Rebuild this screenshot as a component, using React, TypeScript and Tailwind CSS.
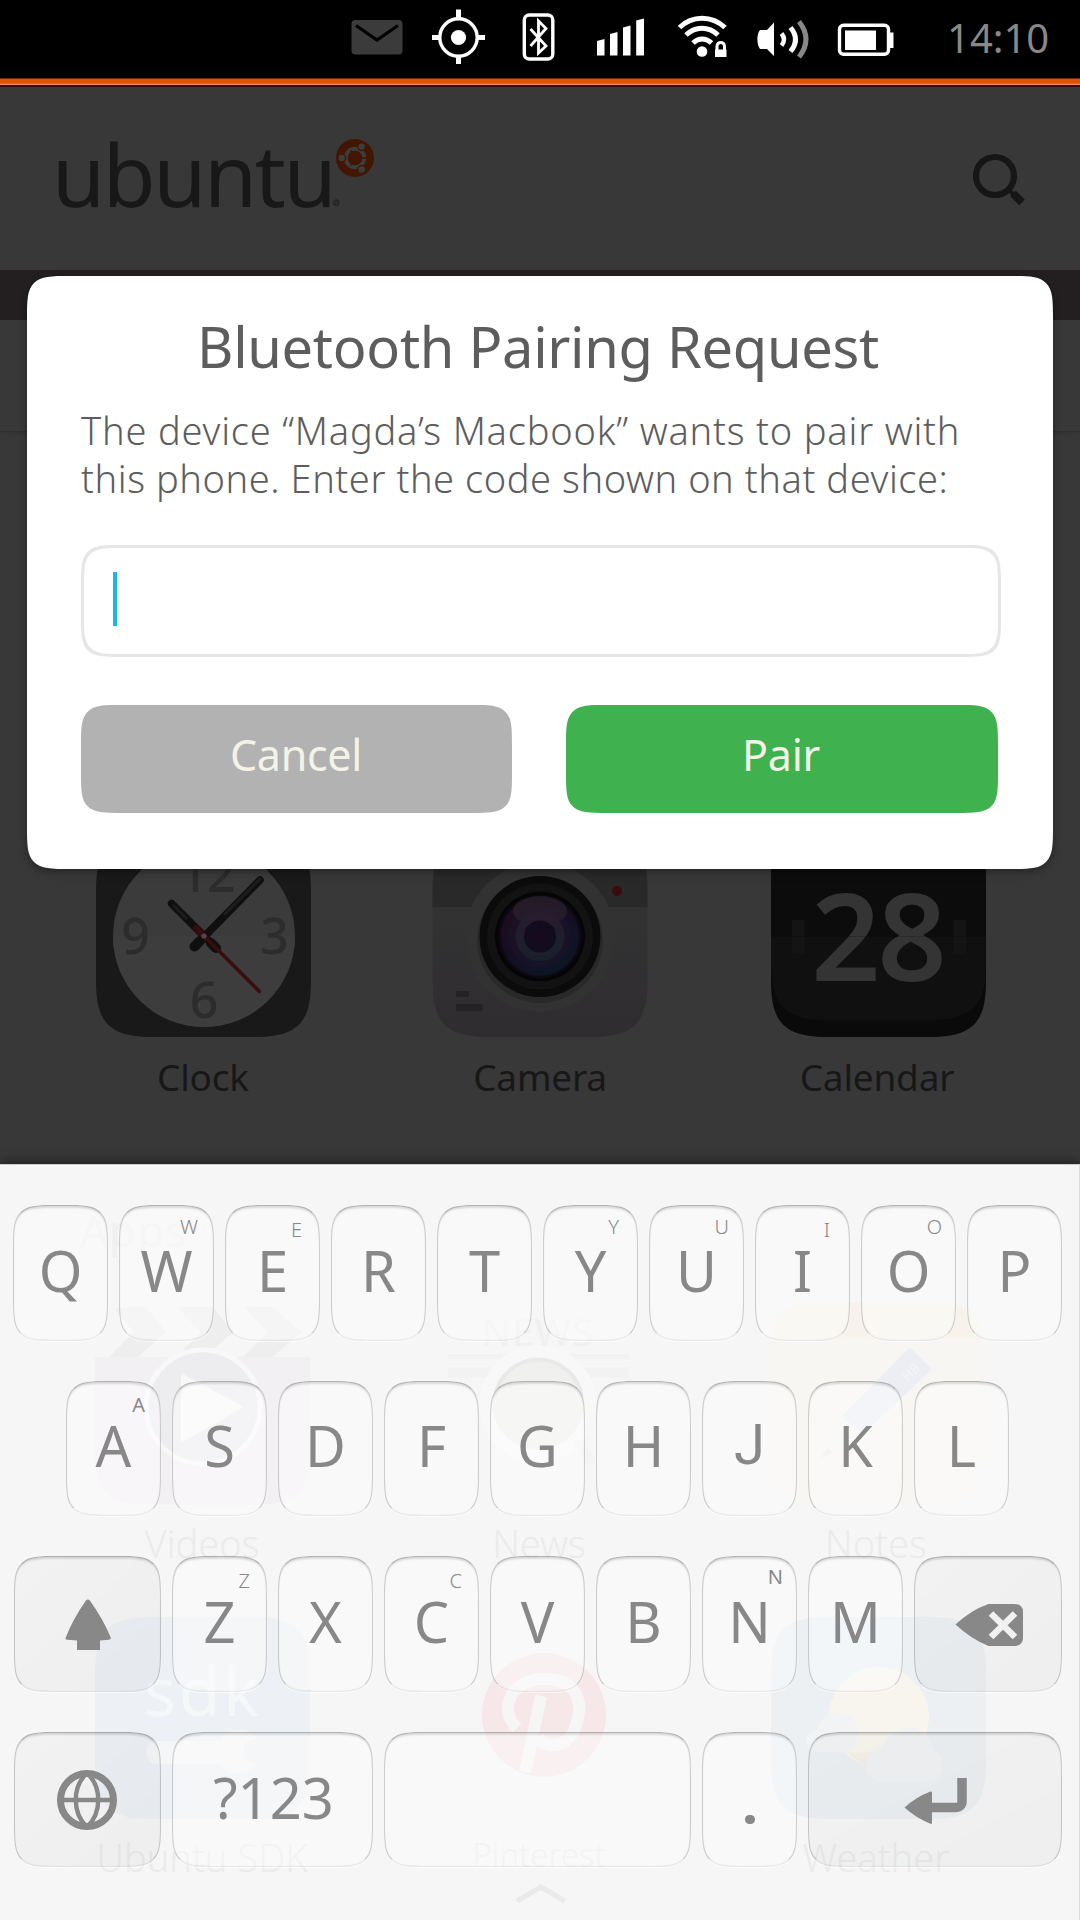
import type { ReactNode } from 'react'

const ICON_SHAPE = (x: number, y: number, w = 215, h = 202) =>
  `M${x} ${y + 56}C${x} ${y + 16} ${x + 12} ${y} ${x + 56} ${y}H${x + w - 56}C${x + w - 12} ${y} ${x + w} ${y + 16} ${x + w} ${y + 56}V${y + h - 56}C${x + w} ${y + h - 16} ${x + w - 12} ${y + h} ${x + w - 56} ${y + h}H${x + 56}C${x + 12} ${y + h} ${x} ${y + h - 16} ${x} ${y + h - 56}Z`

function StatusBar() {
  return (
    <div className="flex h-[78px] items-start bg-black">
      <svg className="ml-[340px] h-[78px] w-[570px] shrink-0" viewBox="340 0 570 78" fill="none">
        <rect x="351.5" y="20" width="51" height="34.5" rx="4" fill="#3b3b3b" />
        <path d="M356 25.5L377 40L398 25.5" stroke="#000" strokeWidth="3.2" />
        <g stroke="#fff">
          <circle cx="458.5" cy="37.5" r="18.7" strokeWidth="3.4" />
          <path d="M458.5 9.5V19M458.5 56V64M432 37.5H440M477 37.5H485" strokeWidth="5" />
          <rect x="524.3" y="15" width="28.5" height="44" rx="5" strokeWidth="3.4" />
          <path d="M530.5 29L546 46L538.5 53V21L546 28.5L530.5 46" strokeWidth="2.8" />
        </g>
        <circle cx="458.5" cy="37.5" r="7.6" fill="#fff" />
        <g fill="#fff">
          <path d="M597 41L604.5 39V55.5H597ZM610 34L617.5 32V55.5H610ZM623 27.5L630.5 25.5V55.5H623ZM636.2 20.5L644 18.5V55.5H636.2Z" />
          <circle cx="702" cy="51.5" r="5.3" />
          <path d="M715 49.5H726.5V57H715Z" />
        </g>
        <g stroke="#fff" strokeWidth="5">
          <path d="M679.5 27.5C692 15 712 15 725 27.5" />
          <path d="M686 35C695.5 26 708.5 26 718 35" />
          <path d="M693 43C698.5 37.5 706 37.5 711.5 43" />
          <path d="M717 50V46.5C717 41 724.5 41 724.5 46.5V50" strokeWidth="3" />
        </g>
        <path d="M774 22.5V56L767 49H760C756.5 44.5 756.5 34 760 30H767Z" fill="#fff" />
        <path d="M781.5 33.5Q786.5 39.5 781.5 45.5" stroke="#fff" strokeWidth="4.5" />
        <path d="M790.5 27.5Q800.5 39.5 790.5 51.5" stroke="#fff" strokeWidth="5" />
        <path d="M799 21.5Q813 39.5 799 57" stroke="#888" strokeWidth="5" />
        <rect x="839.5" y="25.3" width="49" height="29" rx="4" stroke="#fff" strokeWidth="3.4" />
        <rect x="845" y="30.5" width="31" height="19.5" fill="#fff" />
        <path d="M889 32.5H893.5V48H889Z" fill="#fff" />
      </svg>
      <span className="ml-[37px] mt-[9px] text-[40px] leading-[58px] text-[#888888]">14:10</span>
    </div>
  )
}

function Header() {
  return (
    <div className="flex h-[183px] items-start">
      <div className="ml-[52px] mt-[22px] w-[278px] shrink-0 text-[86px] leading-[130px] font-[450] tracking-[-2.4px] text-[#181818]">ubuntu</div>
      <svg className="mt-[48px] h-[80px] w-[48px] shrink-0" viewBox="330 135 48 80" fill="none">
        <circle cx="355" cy="158" r="19" fill="#431503" />
        <circle cx="355" cy="158" r="9.2" stroke="#3d3d3d" strokeWidth="4" />
        <g fill="#3d3d3d" stroke="#431503" strokeWidth="1.4">
          <circle cx="341.8" cy="158" r="3.9" />
          <circle cx="361.6" cy="146.6" r="3.9" />
          <circle cx="361.6" cy="169.4" r="3.9" />
        </g>
        <path d="M355 158L350.5 150.2M355 158L350.5 165.8M355 158H366" stroke="#431503" strokeWidth="1.4" />
        <circle cx="355" cy="158" r="7.2" fill="#431503" />
        <circle cx="336.3" cy="202.7" r="2.9" stroke="#1c1c1c" strokeWidth="1" />
        <path d="M335.3 204.5V201H337.2V202.8H335.3M336.5 202.8L337.6 204.5" stroke="#1c1c1c" strokeWidth=".7" />
      </svg>
      <svg className="ml-auto mr-[54px] mt-[62px] h-[60px] w-[56px]" viewBox="970 149 56 60" fill="none" stroke="#161616">
        <circle cx="995" cy="176" r="19" strokeWidth="6.2" />
        <path d="M1013 193.5L1022 202.5" strokeWidth="8" />
        <path d="M1008 189L1014 195" strokeWidth="4" />
      </svg>
    </div>
  )
}

function AppTile({ label, view, labelClass, children }: { label: string; view: string; labelClass: string; children: ReactNode }) {
  return (
    <div className="flex w-[215px] flex-col items-center">
      <svg className="h-[202px] w-[215px] overflow-visible" viewBox={view} fill="none">
        {children}
      </svg>
      <span className={labelClass}>{label}</span>
    </div>
  )
}

const DARK_LABEL = 'mt-[16px] mr-[1px] whitespace-nowrap text-[37px] leading-[48px] tracking-[-0.2px] text-[#171717]'

function DimmedApps() {
  return (
    <div className="flex gap-[122px] pl-[96px]">
      <AppTile label="Clock" view="96 835 215 202" labelClass={DARK_LABEL}>
        <path d={ICON_SHAPE(96, 835)} fill="#191919" />
        <circle cx="204" cy="936" r="91" fill="#3b3b3b" />
        <path d="M113 936A91 91 0 0 0 295 936Z" fill="#3d3d3d" />
        <g fill="#2c2c2c" fontSize="50" fontWeight="500" textAnchor="middle">
          <text x="207" y="891.5" letterSpacing="-1">12</text>
          <text x="135.5" y="954">9</text>
          <text x="274.5" y="954">3</text>
          <text x="204" y="1018">6</text>
        </g>
        <g strokeLinecap="round" stroke="#0f0f0f">
          <path d="M195 946L260 880" strokeWidth="7.5" />
          <path d="M194.5 946.5L200 941M216 948L211 943" strokeWidth="10" />
          <path d="M171.5 903.5L214 946" strokeWidth="7.5" />
          <path d="M225 914L260 879M174 906L186 918" stroke="#1d1d1b" strokeWidth="3" />
          <path d="M196 928L206 938" stroke="#3c0b0d" strokeWidth="6" />
          <path d="M204 936L259.5 991.5" stroke="#3c0b0d" strokeWidth="3.4" />
        </g>
        <circle cx="204" cy="936" r="2.6" fill="#4a4a4a" />
      </AppTile>

      <AppTile label="Camera" view="433 835 215 202" labelClass={DARK_LABEL}>
        <defs>
          <linearGradient id="body" x1="0" y1="900" x2="0" y2="1037" gradientUnits="userSpaceOnUse">
            <stop stopColor="#333333" />
            <stop offset="1" stopColor="#2f2c30" />
          </linearGradient>
          <radialGradient id="lens" cx="540" cy="936" r="45" gradientUnits="userSpaceOnUse">
            <stop stopColor="#1b0e22" />
            <stop offset=".7" stopColor="#1a0d22" />
            <stop offset="1" stopColor="#08050b" />
          </radialGradient>
          <linearGradient id="glow" x1="500" y1="900" x2="550" y2="975" gradientUnits="userSpaceOnUse">
            <stop stopColor="#260e1e" stopOpacity=".8" />
            <stop offset=".5" stopColor="#170f26" stopOpacity=".6" />
            <stop offset="1" stopColor="#0a1826" stopOpacity=".9" />
          </linearGradient>
          <linearGradient id="innerRing" x1="0" y1="912" x2="0" y2="961" gradientUnits="userSpaceOnUse">
            <stop stopColor="#281c2e" />
            <stop offset="1" stopColor="#18202c" />
          </linearGradient>
          <clipPath id="cameraTop">
            <path d="M430 830H652V907H430Z" />
          </clipPath>
        </defs>
        <path d={ICON_SHAPE(432.5, 835)} fill="url(#body)" />
        <path d={ICON_SHAPE(432.5, 835)} fill="#292929" clipPath="url(#cameraTop)" />
        <circle cx="540" cy="937" r="75" fill="#323232" />
        <circle cx="540" cy="940" r="63" fill="#000" opacity=".18" />
        <circle cx="540" cy="936.5" r="60.5" fill="#0b0b0b" />
        <circle cx="540" cy="936.5" r="53" fill="#121212" />
        <circle cx="540" cy="936.5" r="45" fill="#050505" />
        <circle cx="540" cy="936.5" r="41.5" fill="url(#lens)" />
        <circle cx="540" cy="936.5" r="39" fill="url(#glow)" />
        <circle cx="540" cy="936.5" r="31" fill="#1b1428" opacity=".5" />
        <ellipse cx="540" cy="911" rx="27" ry="15" fill="#2a242e" opacity=".65" />
        <circle cx="540" cy="936.5" r="24.5" fill="url(#innerRing)" />
        <circle cx="540" cy="936.5" r="16" fill="#130b1e" />
        <circle cx="540" cy="936.5" r="6" fill="#170a1c" />
        <circle cx="617" cy="891" r="5" fill="#3c0b0d" />
        <path d="M456 991H469V997H456ZM456 1004H482.5V1011H456Z" fill="#232323" />
      </AppTile>

      <AppTile label="Calendar" view="770 835 215 202" labelClass={DARK_LABEL}>
        <path d={ICON_SHAPE(771, 835)} fill="#0a0a0a" />
        <path d={ICON_SHAPE(771, 818)} fill="#101010" />
        <path d="M771 850H986V936.5H771Z" fill="#0c0c0c" />
        <path d="M792 920H804.5V953.5H792ZM953.5 920H966V953.5H953.5Z" fill="#141414" />
        <text x="877.5" y="980.5" fontSize="121" fontWeight="600" letterSpacing="-3" textAnchor="middle" fill="#343434">28</text>
        <path d="M771 936.5H986" stroke="#000" strokeOpacity=".18" />
      </AppTile>
    </div>
  )
}

const GHOST_LABEL = 'mt-[15px] mr-[3px] whitespace-nowrap text-[38px] font-light leading-[47px] text-[#ebebeb]'
const GHOST_LABEL_SMALL = 'mt-[12px] mr-[3px] whitespace-nowrap text-[33px] font-light leading-[48px] text-[#ebebeb]'

function GhostApps() {
  return (
    <div className="absolute inset-0 flex flex-col">
      <div className="pl-[80px] pt-[37px] text-[44px] leading-[56px] tracking-[1px] text-[#f0f0f0]">Apps</div>
      <div className="mt-[45px] flex gap-[122px] pl-[96px]">
        <AppTile label="Videos" view="96 1302 215 202" labelClass={GHOST_LABEL}>
          <path d="M95 1356H310V1450C310 1490 298 1504 254 1504H151C107 1504 95 1490 95 1450Z" fill="#f3f0f3" />
          <path d="M115 1309Q122 1305 146 1306L166 1331L138 1356H109L134 1331ZM177 1306H213L233 1331L205 1356H176L201 1331ZM244 1306H272L302 1331L272 1356H243L268 1331Z" fill="#eeeeee" />
          <circle cx="203" cy="1406" r="57" fill="#edecee" stroke="#f8f8f8" strokeWidth="5" />
          <path d="M181 1372V1442L244 1406Z" fill="#f8f8f8" />
        </AppTile>
        <AppTile label="News" view="434 1302 215 202" labelClass={GHOST_LABEL}>
          <text x="539" y="1345" fontSize="39" letterSpacing="1" textAnchor="middle" fill="#f0f0f0">NEWS</text>
          <path d="M449 1353H630V1358H449ZM449 1366H630V1377H449Z" fill="#f2f2f2" />
          <circle cx="539" cy="1403" r="52" fill="#f0f0ef" stroke="#f8f8f8" strokeWidth="13" />
          <path d="M496 1396A44 44 0 0 1 583 1396" stroke="#e9e9e9" strokeWidth="4" />
          <path d="M580 1443L592 1460" stroke="#f4f4f4" strokeWidth="9" strokeLinecap="round" />
        </AppTile>
        <AppTile label="Notes" view="771 1302 215 202" labelClass={GHOST_LABEL}>
          <path d={ICON_SHAPE(770, 1302, 214)} fill="#f7f6f3" />
          <path d="M772 1338C774 1312 786 1302 820 1302H934C970 1302 980 1312 983 1338Z" fill="#f7f3ec" />
          <path d="M911 1346L933 1368L865 1432L842 1416Z" fill="#eceef3" />
          <path d="M842 1416L822 1457L865 1432Z" fill="#f6f5f2" />
          <path d="M828 1446L822 1457L834 1452Z" fill="#ededee" />
          <text x="911" y="1376" fontSize="13" fill="#f6f6f6" transform="rotate(-45 911 1370)" textAnchor="middle">HB</text>
        </AppTile>
      </div>
      <div className="mt-[50px] flex gap-[122px] pl-[96px]">
        <AppTile label="Ubuntu SDK" view="96 1616 215 202" labelClass={GHOST_LABEL}>
          <path d={ICON_SHAPE(95, 1616)} fill="#edf0f4" />
          <text x="203" y="1715" fontSize="67" letterSpacing="3" textAnchor="middle" fill="#f6f7f8">sdk</text>
          <path d="M157 1740H220C228 1726 246 1726 258 1737L244 1742V1758L258 1763C246 1776 228 1776 220 1763H157C143 1763 143 1740 157 1740Z" fill="#f5f6f7" />
        </AppTile>
        <AppTile label="Pinterest" view="433 1616 215 202" labelClass={GHOST_LABEL_SMALL}>
          <circle cx="544" cy="1714" r="62" fill="#f6e7e8" />
          <path d="M525 1771L541 1695M517 1727C496 1706 514 1678 544 1678C574 1678 584 1698 577 1721C570 1748 545 1750 538 1735" stroke="#f6f6f6" strokeWidth="12" />
        </AppTile>
        <AppTile label="Weather" view="770 1616 215 202" labelClass={GHOST_LABEL}>
          <path d={ICON_SHAPE(771, 1616)} fill="#ecf0f3" />
          <circle cx="879" cy="1716" r="50" fill="#f8f5ee" />
          <path d="M847 1751Q880 1755 902 1740L880 1766Q860 1765 847 1751Z" fill="#f6eee7" />
          <path d="M815 1751C802 1747 804 1730 817 1729C821 1708 850 1706 855 1722C862 1735 854 1750 846 1751Z" fill="#f2f3f4" />
          <path d="M878 1780C860 1776 862 1750 882 1747C892 1720 928 1720 934 1750C949 1756 944 1778 930 1780Z" fill="#f1f2f3" />
        </AppTile>
      </div>
      <svg className="mx-auto h-[24px] w-[60px]" viewBox="512 1881 60 24" fill="none">
        <path d="M519 1901L543 1887L567 1901" stroke="#eaeaea" strokeWidth="5" />
      </svg>
    </div>
  )
}

const KEY =
  'relative flex h-[135.5px] shrink-0 items-center justify-center rounded-[46px] border border-x-black/18 border-t-black/28 border-b-black/7 pb-[6px] text-[56px] font-[450] text-[#888888] [corner-shape:squircle] shadow-[inset_0_3px_2px_-1px_rgba(0,0,0,0.12),inset_0_0_2px_rgba(0,0,0,0.05),0_1px_1px_rgba(255,255,255,0.7)]'
const LETTER_KEY = KEY + ' w-[95px] bg-white/40'
const DARK_KEY = KEY + ' bg-linear-to-br from-black/[0.015] to-black/[0.03]'

const HINTS: Record<string, string> = {
  W: 'top-[8px] right-[15px] font-light',
  E: 'top-[11px] right-[17px] font-light',
  Y: 'top-[8px] right-[18px] font-light',
  U: 'top-[8px] right-[14px] font-light',
  I: 'top-[11px] right-[19px] font-light',
  O: 'top-[8px] right-[13px] font-light',
  A: 'top-[10px] right-[15px] font-normal',
  Z: 'top-[11px] right-[16px] font-light',
  C: 'top-[11px] right-[16px] font-light',
  N: 'top-[7px] right-[13px] font-normal',
}

function LetterKey({ letter }: { letter: string }) {
  return (
    <div className={LETTER_KEY}>
      <span className={letter === 'J' ? "[font-family:Roboto,sans-serif]" : undefined}>{letter}</span>
      {HINTS[letter] && <span className={'absolute text-[20px] leading-[25px] ' + HINTS[letter]}>{letter}</span>}
    </div>
  )
}

const letters = (row: string) => row.split('').map((l) => <LetterKey key={l} letter={l} />)

function Keyboard() {
  return (
    <div className="relative h-[756px] border-t border-r border-t-[#cccccc] border-r-[#dddddd] bg-[#f6f6f6] shadow-[0_-3px_10px_rgba(0,0,0,0.4)]">
      <GhostApps />
      <div className="relative flex flex-col gap-[40.1px] pt-[40px]">
        <div className="flex gap-[11px] pl-[13px]">{letters('QWERTYUIOP')}</div>
        <div className="flex gap-[11px] pl-[66px]">{letters('ASDFGHJKL')}</div>
        <div className="flex gap-[11px] pl-[14px]">
          <div className={DARK_KEY + ' w-[147px]'}>
            <svg className="absolute top-[42px] left-[48px] h-[52px] w-[50px]" viewBox="0 0 50 52" fill="#888888">
              <path d="M22.8 1.8Q25 -1 27 1.8Q40 20 47.5 38Q48.5 40.5 46 40.7L37 41.5V51H14V41.5L4.5 40.7Q1.5 40.5 3 38Q10 20 22.8 1.8Z" />
            </svg>
          </div>
          {letters('ZXCVBNM')}
          <div className={DARK_KEY + ' w-[148px]'}>
            <svg className="absolute top-[46px] left-[39px] h-[44px] w-[70px]" viewBox="0 0 70 44" fill="none">
              <path d="M1.5 21.5Q17 7 34.5 1H60Q69 1 69 9V35Q69 43 60 43H34.5Q17 36 1.5 21.5Z" fill="#888888" />
              <path d="M37 10.5L61 34M61 10.5L37 34" stroke="#f1f1f1" strokeWidth="6.5" />
            </svg>
          </div>
        </div>
        <div className="flex gap-[11px] pl-[14px]">
          <div className={DARK_KEY + ' w-[147px]'}>
            <svg className="absolute top-[36px] left-[41px] h-[62px] w-[62px]" viewBox="0 0 62 62" fill="none" stroke="#888888">
              <circle cx="31" cy="31" r="26.5" strokeWidth="7" />
              <path d="M3 31H59M31 4C16 18 16 44 31 58C46 44 46 18 31 4Z" strokeWidth="4.4" />
            </svg>
          </div>
          <div className={KEY + ' w-[201px] bg-white/40 pl-[2px]'}>?123</div>
          <div className={KEY + ' w-[307px] bg-white/40'} />
          <div className={LETTER_KEY}>
            <span className="absolute top-[82px] left-[42px] size-[9.5px] rounded-full bg-[#888888]" />
          </div>
          <div className={DARK_KEY + ' w-[254px]'}>
            <svg className="absolute top-[44px] left-[95px] h-[48px] w-[64px]" viewBox="0 0 64 48" fill="none">
              <path d="M58 1V24Q58 30.5 51 30.5H26" stroke="#888888" strokeWidth="9.5" />
              <path d="M.5 30.5Q12 20 26.5 14.5Q28 14 28 16V45.5Q28 47.5 26.5 46.7Q12 41 .5 30.5Z" fill="#888888" />
            </svg>
          </div>
        </div>
      </div>
    </div>
  )
}

function PairingDialog() {
  return (
    <div className="absolute top-[276px] left-[27px] flex h-[592.5px] w-[1026px] flex-col rounded-[44px] bg-white pl-[54px] pt-[32px] text-[#5d5d5d] shadow-[0_3px_8px_rgba(0,0,0,0.35)] [corner-shape:squircle]">
      <h1 className="mr-[58px] text-center text-[56px] leading-[76px] tracking-[-0.3px] whitespace-nowrap">Bluetooth Pairing Request</h1>
      <p className="mt-[22px] text-[38px] leading-[48px] font-light whitespace-nowrap">
        <span className="block tracking-[0.81px]">The device “Magda’s Macbook” wants to pair with</span>
        <span className="block tracking-[0.57px]">this phone. Enter the code shown on that device:</span>
      </p>
      <div className="mt-[43px] flex h-[112px] w-[920px] items-start rounded-[42px] border-[3px] border-[#e6e6e6] pt-[24px] pl-[29px] [corner-shape:squircle]">
        <span className="h-[54px] w-[4px] bg-[#19b6ee]" />
      </div>
      <div className="mt-[48px] flex gap-[54px] text-[43px] tracking-[-0.3px] text-[#f3f3e7]">
        <button className="h-[108px] w-[431px] rounded-[42px] bg-[#b2b2b2] pr-[1px] pb-[7px] [corner-shape:squircle]">Cancel</button>
        <button className="h-[108px] w-[432px] rounded-[42px] bg-[#3fb24f] pr-[2px] pb-[7px] [corner-shape:squircle]">Pair</button>
      </div>
    </div>
  )
}

export default function App() {
  return (
    <div className="relative h-[1920px] w-[1080px] overflow-hidden bg-[#383838] [font-family:'Noto_Sans','Open_Sans',sans-serif]">
      <StatusBar />
      <div className="h-[9px] border-t border-t-[#7a2600] border-b-2 border-b-[#35120a] bg-linear-to-b from-[#e84e00] from-70% to-[#f0a080]" />
      <Header />
      <div className="h-[50px] bg-[#231f20]" />
      <div className="h-[112px] border-b border-b-[#303030] shadow-[0_2px_3px_rgba(0,0,0,0.1)]" />
      <div className="h-[732px] pt-[403px]">
        <DimmedApps />
      </div>
      <Keyboard />
      <PairingDialog />
    </div>
  )
}
